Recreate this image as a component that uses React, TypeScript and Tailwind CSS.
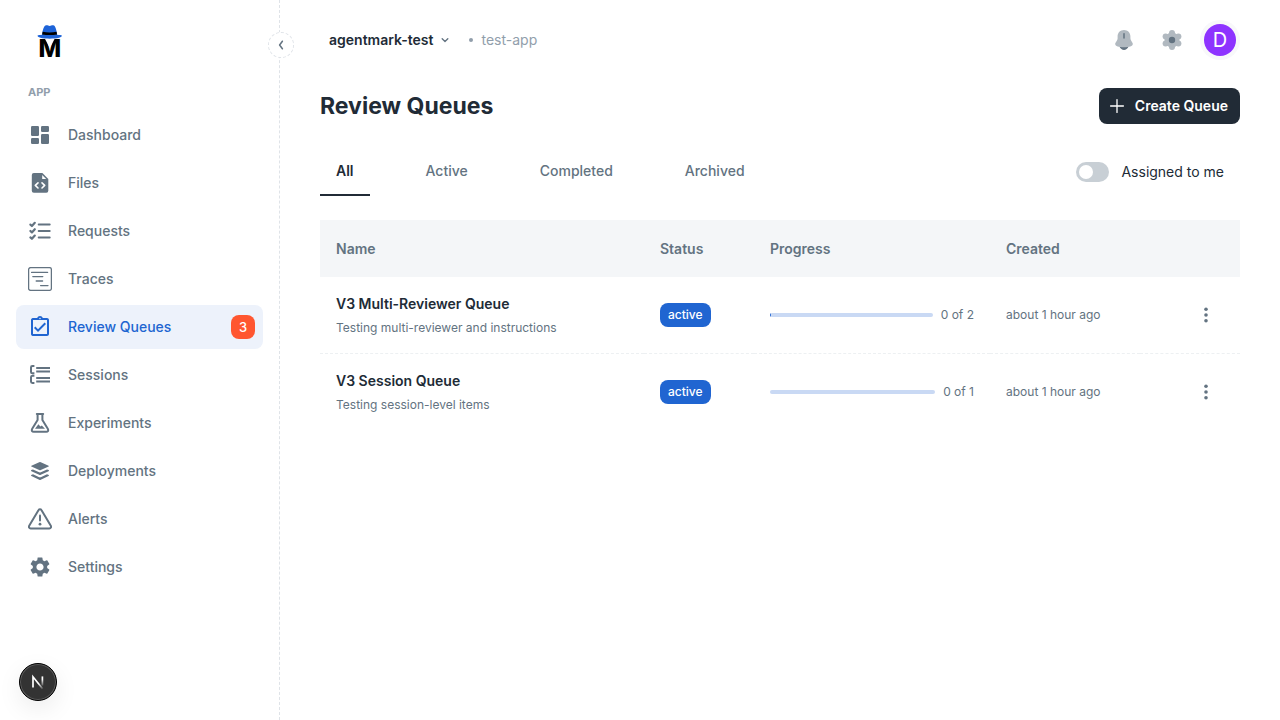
import { useState, type ReactNode } from "react";
import { MdOutlineAssignmentTurnedIn, MdSettings } from "react-icons/md";

function Icon({ children }: { children: ReactNode }) {
  return (
    <svg viewBox="0 0 24 24" className="size-6 shrink-0" fill="none" aria-hidden="true">
      {children}
    </svg>
  );
}

const DashboardIcon = () => (
  <Icon>
    <g fill="currentColor">
      <rect x="3" y="3" width="8" height="10" rx="1.2" />
      <rect x="3" y="15" width="8" height="6" rx="1.2" />
      <rect x="13" y="3" width="8" height="6" rx="1.2" />
      <rect x="13" y="11" width="8" height="10" rx="1.2" />
    </g>
  </Icon>
);

const FilesIcon = () => (
  <Icon>
    <path
      fill="currentColor"
      d="M5.8 2H14.4L20.3 7.9V19.8A2 2 0 0 1 18.3 21.8H5.8A2 2 0 0 1 3.8 19.8V4A2 2 0 0 1 5.8 2Z"
    />
    <path d="M14.2 4V8H18.2Z" fill="white" />
    <path
      d="M10 11.8 7.3 14.4 10 17M14 11.8 16.7 14.4 14 17"
      stroke="white"
      strokeWidth="1.6"
      strokeLinecap="round"
      strokeLinejoin="round"
    />
  </Icon>
);

const RequestsIcon = () => (
  <Icon>
    <g stroke="currentColor" strokeWidth="2" strokeLinecap="round" strokeLinejoin="round">
      <path d="M10.7 5.6H21.7M10.7 12H21.7M10.7 18.4H21.7" />
      <path d="M2.4 5.6 3.9 7 6.8 3.8M2.4 12 3.9 13.4 6.8 10.2M2.4 18.4 3.9 19.8 6.8 16.6" strokeWidth="2.2" />
    </g>
  </Icon>
);

const TracesIcon = () => (
  <Icon>
    <g stroke="currentColor" strokeWidth="1.3" strokeLinecap="round">
      <rect x="0.6" y="0.6" width="22.8" height="22.8" rx="2" />
      <path d="M3.6 5.4H19.6M4.8 9.6H14.8M8.2 14H14.6M12.6 18.6H20" />
    </g>
  </Icon>
);

const ReviewIcon = () => <MdOutlineAssignmentTurnedIn className="size-6 shrink-0" aria-hidden="true" />;

const SessionsIcon = () => (
  <Icon>
    <g stroke="currentColor" strokeWidth="2">
      <path d="M6.4 3H4.4Q3 3 3 4.4V9Q3 10.3 4.4 10.3H6.4M6.4 12.8H4.4Q3 12.8 3 14.3V18.6Q3 20 4.4 20H6.4" />
      <path d="M8.2 5H22M8.2 8.4H22M8.2 15H22M8.2 18.4H22" />
    </g>
  </Icon>
);

const ExperimentsIcon = () => (
  <Icon>
    <path
      d="M8.8 3H15.2M9.6 3.2V9L4.2 17.8C3.2 19.6 4 20.8 5.8 20.8H18.2C20 20.8 20.8 19.6 19.8 17.8L14.4 9V3.2"
      stroke="currentColor"
      strokeWidth="2"
      strokeLinecap="round"
      strokeLinejoin="round"
    />
    <path d="M7 17.8 10.4 13.2 12.4 15.4 13.8 14.6 17 17.8Z" fill="currentColor" />
  </Icon>
);

const DeploymentsIcon = () => (
  <Icon>
    <path
      d="M11.2 3.2Q12 2.8 12.8 3.2L20.6 6.7Q21.3 7.1 20.6 7.6L12.8 11.1Q12 11.5 11.2 11.1L3.4 7.6Q2.7 7.1 3.4 6.7Z"
      fill="currentColor"
    />
    <path
      d="M3.2 11.1Q2.7 11.7 3.4 12.2L11.2 15.8Q12 16.2 12.8 15.8L20.6 12.2Q21.3 11.7 20.8 11.1L19 10.4 12.8 13.3Q12 13.6 11.2 13.3L5 10.4ZM3.2 16Q2.7 16.6 3.4 17.1L11.2 20.7Q12 21.1 12.8 20.7L20.6 17.1Q21.3 16.6 20.8 16L19 15.3 12.8 18.2Q12 18.5 11.2 18.2L5 15.3Z"
      fill="currentColor"
    />
  </Icon>
);

const AlertsIcon = () => (
  <Icon>
    <g stroke="currentColor" strokeLinecap="round" strokeLinejoin="round">
      <path
        d="M10.6 3.1 1.2 18.8C.5 20.1 1.2 21.4 2.6 21.4H21.4C22.8 21.4 23.5 20.1 22.8 18.8L13.4 3.1C12.8 2 11.2 2 10.6 3.1Z"
        strokeWidth="2"
      />
      <path d="M12 8.4V13.4" strokeWidth="2" />
    </g>
    <circle cx="12" cy="17.2" r="1.4" fill="currentColor" />
  </Icon>
);

const SettingsIcon = () => <MdSettings className="size-6 shrink-0" aria-hidden="true" />;

const navItems = [
  { label: "Dashboard", icon: DashboardIcon },
  { label: "Files", icon: FilesIcon },
  { label: "Requests", icon: RequestsIcon },
  { label: "Traces", icon: TracesIcon },
  { label: "Review Queues", icon: ReviewIcon, badge: 3, active: true },
  { label: "Sessions", icon: SessionsIcon },
  { label: "Experiments", icon: ExperimentsIcon },
  { label: "Deployments", icon: DeploymentsIcon },
  { label: "Alerts", icon: AlertsIcon },
  { label: "Settings", icon: SettingsIcon },
];

const tabs = ["All", "Active", "Completed", "Archived"];

const queues = [
  {
    name: "V3 Multi-Reviewer Queue",
    description: "Testing multi-reviewer and instructions",
    status: "active",
    done: 0,
    total: 2,
    started: true,
    created: "about 1 hour ago",
  },
  {
    name: "V3 Session Queue",
    description: "Testing session-level items",
    status: "active",
    done: 0,
    total: 1,
    started: false,
    created: "about 1 hour ago",
  },
];

function Logo() {
  return (
    <svg viewBox="0 0 26 40" className="h-10 w-[26px]" role="img" aria-label="AgentMark">
      <text
        x="12.7"
        y="33"
        textAnchor="middle"
        fontSize="24"
        className="fill-black font-['Inter',sans-serif] font-extrabold"
      >
        M
      </text>
      <path d="M7 13H18.6L12.8 24Z" fill="white" />
      <path
        d="M5 11C5.6 7 6.4 2.8 8.4 1.6C10.2.8 11.2 2 12.7 2C14.2 2 15.2.8 17 1.6C18.8 2.8 19.6 7 20.2 11Z"
        fill="#1d63d8"
      />
      <path
        d="M.6 11.6C3 10.2 22.4 10.2 24.8 11.6C25.2 12.4 24 13.2 22 13.8C17 15 8.4 15 3.4 13.8C1.4 13.2.2 12.4.6 11.6Z"
        fill="#1d63d8"
      />
      <path d="M5.6 7.8Q12.7 9 19.6 7.8L20 10.6Q12.7 11.6 5.2 10.6Z" fill="black" />
    </svg>
  );
}

function Sidebar() {
  return (
    <aside className="relative w-[280px] shrink-0 border-r border-dashed border-[#dfe3e8] px-4">
      <a href="#home" className="ml-5 mt-6 block w-fit pl-px">
        <Logo />
      </a>
      <button
        type="button"
        aria-label="Collapse sidebar"
        className="absolute -right-[15px] top-8 flex size-[26px] items-center justify-center rounded-full border border-dashed border-[#dfe3e8] bg-white text-[#637381]"
      >
        <svg viewBox="0 0 16 16" className="size-4" fill="none" aria-hidden="true">
          <path d="M9.4 4.2 6.6 8 9.4 11.8" stroke="currentColor" strokeWidth="1.5" strokeLinecap="round" strokeLinejoin="round" />
        </svg>
      </button>
      <h2 className="mb-3 mt-[19px] px-3 text-[11px] font-bold leading-[18px] text-[#919eab]">APP</h2>
      <nav aria-label="App" className="flex flex-col gap-1">
        {navItems.map(({ label, icon: ItemIcon, badge, active }) => (
          <a
            key={label}
            href="#nav"
            aria-current={active ? "page" : undefined}
            className={
              active
                ? "flex h-11 items-center gap-4 rounded-lg bg-[#edf2fb] pl-3 pr-2 text-sm font-medium text-[#2065d1]"
                : "flex h-11 items-center gap-4 rounded-lg pl-3 pr-2 text-sm font-medium text-[#637381]"
            }
          >
            <ItemIcon />
            <span className="flex-1">{label}</span>
            {badge && (
              <span className="flex size-6 items-center justify-center rounded-lg bg-[#ff5630] text-[13px] font-medium text-white">
                {badge}
              </span>
            )}
          </a>
        ))}
      </nav>
    </aside>
  );
}

function TopBar() {
  return (
    <header className="flex h-20 items-center justify-between pl-[9px] pr-1">
      <div className="flex items-center text-sm">
        <button type="button" className="flex items-center gap-1 font-semibold text-[#212b36]">
          agentmark-test
          <svg viewBox="0 0 16 16" className="size-4 text-[#637381]" fill="none" aria-hidden="true">
            <path d="M5.2 6.8 8 9.4 10.8 6.8" stroke="currentColor" strokeWidth="1.4" strokeLinecap="round" strokeLinejoin="round" />
          </svg>
        </button>
        <span className="ml-4 size-1 rounded-full bg-[#919eab]" />
        <a href="#app" className="ml-2 text-[#919eab]">test-app</a>
      </div>
      <div className="flex items-center gap-6">
        <button type="button" aria-label="Notifications">
          <svg viewBox="0 0 24 24" className="size-6" aria-hidden="true">
            <path d="M7.4 18.6H16.6Q15 22 12 22T7.4 18.6Z" fill="#637381" />
            <path
              d="M12 2C8.2 2 5.6 4.8 5.6 8.4V10.2C5.6 11.4 5.2 12.2 4.5 13.2C3.8 14.2 3.2 15 3.2 16C3.2 18.2 6.8 19.2 12 19.2S20.8 18.2 20.8 16C20.8 15 20.2 14.2 19.5 13.2C18.8 12.2 18.4 11.4 18.4 10.2V8.4C18.4 4.8 15.8 2 12 2Z"
              fill="#b1b9c0"
            />
            <path d="M12 5.8V10" stroke="#637381" strokeWidth="1.5" strokeLinecap="round" />
          </svg>
        </button>
        <button type="button" aria-label="Preferences">
          <svg viewBox="0 0 24 24" className="size-6" aria-hidden="true">
            <g fill="#b1b9c0">
              <circle cx="12" cy="12" r="7.5" />
              <circle cx="12" cy="5" r="3" />
              <circle cx="12" cy="19" r="3" />
              <circle cx="5.6" cy="8.4" r="3" />
              <circle cx="18.4" cy="8.4" r="3" />
              <circle cx="5.6" cy="15.6" r="3" />
              <circle cx="18.4" cy="15.6" r="3" />
            </g>
            <circle cx="12" cy="12" r="3.2" fill="#637381" />
          </svg>
        </button>
        <button
          type="button"
          aria-label="Account"
          className="-ml-1 flex size-8 items-center justify-center rounded-full bg-[#8e33ff] text-xl text-white ring-4 ring-[#f8f8fa]"
        >
          D
        </button>
      </div>
    </header>
  );
}

function QueueTable() {
  return (
    <table className="mt-6 w-full table-fixed text-left">
      <colgroup>
        <col />
        <col className="w-[110px]" />
        <col className="w-[236px]" />
        <col className="w-[150px]" />
        <col className="w-[100px]" />
      </colgroup>
      <thead>
        <tr className="h-[57px] bg-[#f4f6f8] text-sm text-[#637381]">
          <th scope="col" className="px-4 font-semibold">Name</th>
          <th scope="col" className="px-4 font-semibold">Status</th>
          <th scope="col" className="px-4 font-semibold">Progress</th>
          <th scope="col" className="px-4 font-semibold">Created</th>
          <th scope="col" aria-label="Actions" className="px-4" />
        </tr>
      </thead>
      <tbody>
        {queues.map((queue) => (
          <tr key={queue.name} className="h-[76px] border-b border-dashed border-[#edf0f2] last:h-[78px] last:border-b-0">
            <td className="px-4">
              <div className="text-sm font-semibold leading-[22px] text-[#212b36]">{queue.name}</div>
              <div className="mt-1 text-xs leading-[18px] text-[#637381]">{queue.description}</div>
            </td>
            <td className="px-4">
              <span className="flex h-6 w-fit items-center rounded-lg bg-[#2065d1] px-2 text-xs font-medium text-white">
                {queue.status}
              </span>
            </td>
            <td className="px-4">
              <div className="flex items-center gap-2">
                <div
                  role="progressbar"
                  aria-label={`${queue.name} progress`}
                  aria-valuenow={queue.done}
                  aria-valuemax={queue.total}
                  className="h-1 flex-1 overflow-hidden rounded-full bg-[#c9d9f4]"
                >
                  {queue.started && <div className="h-full w-px bg-[#2065d1]" />}
                </div>
                <span className="text-xs text-[#637381]">
                  {queue.done} of {queue.total}
                </span>
              </div>
            </td>
            <td className="whitespace-nowrap px-4 text-xs text-[#637381]">{queue.created}</td>
            <td className="px-4">
              <button
                type="button"
                aria-label={`Actions for ${queue.name}`}
                className="ml-auto flex size-9 items-center justify-center text-[#637381]"
              >
                <svg viewBox="0 0 20 20" className="size-5" fill="currentColor" aria-hidden="true">
                  <circle cx="10" cy="4.2" r="1.8" />
                  <circle cx="10" cy="10" r="1.8" />
                  <circle cx="10" cy="15.8" r="1.8" />
                </svg>
              </button>
            </td>
          </tr>
        ))}
      </tbody>
    </table>
  );
}

export default function App() {
  const [tab, setTab] = useState("All");
  const [mine, setMine] = useState(false);

  return (
    <div className="flex min-h-screen bg-white font-['Inter',sans-serif] text-[#212b36]">
      <Sidebar />
      <main className="min-w-0 flex-1 px-10">
        <TopBar />
        <div className="mt-2 flex items-center justify-between">
          <h1 className="text-[23px] font-bold leading-9">Review Queues</h1>
          <button
            type="button"
            className="flex h-9 items-center gap-2 rounded-lg bg-[#212b36] pl-2 pr-3 text-sm font-semibold text-white"
          >
            <svg viewBox="0 0 20 20" className="size-5" fill="none" aria-hidden="true">
              <path d="M10 3.6V16.4M3.6 10H16.4" stroke="currentColor" strokeWidth="1.3" strokeLinecap="round" />
            </svg>
            Create Queue
          </button>
        </div>
        <div className="mt-6 flex items-center justify-between">
          <div role="tablist" className="flex gap-10">
            {tabs.map((name) => (
              <button
                key={name}
                type="button"
                role="tab"
                aria-selected={tab === name}
                onClick={() => setTab(name)}
                className={
                  tab === name
                    ? "h-12 border-b-2 border-[#212b36] px-4 text-sm font-semibold text-[#212b36]"
                    : "h-12 border-b-2 border-transparent px-4 text-sm font-medium text-[#637381]"
                }
              >
                {name}
              </button>
            ))}
          </div>
          <label className="flex items-center gap-3 pr-4 text-sm">
            <input
              type="checkbox"
              role="switch"
              checked={mine}
              onChange={(event) => setMine(event.target.checked)}
              className="h-5 w-[33px] appearance-none rounded-full bg-[#c8cfd5] p-[3px] before:block before:size-[14px] before:rounded-full before:bg-white checked:bg-[#212b36] checked:before:ml-auto"
            />
            Assigned to me
          </label>
        </div>
        <QueueTable />
      </main>
      <button
        type="button"
        aria-label="Open developer tools"
        className="fixed bottom-[19px] left-[19px] flex size-[38px] items-center justify-center rounded-full border border-black bg-[#333333] shadow-[inset_0_0_0_1px_#5c5c5c,0_8px_24px_rgba(0,0,0,0.08)]"
      >
        <svg viewBox="0 0 20 20" className="size-5" fill="none" aria-hidden="true">
          <defs>
            <linearGradient id="stem" x1="0" y1="4" x2="0" y2="15" gradientUnits="userSpaceOnUse">
              <stop offset="0.3" stopColor="white" />
              <stop offset="1" stopColor="white" stopOpacity="0" />
            </linearGradient>
            <linearGradient id="slash" x1="9" y1="9" x2="15" y2="17" gradientUnits="userSpaceOnUse">
              <stop offset="0.3" stopColor="white" />
              <stop offset="1" stopColor="white" stopOpacity="0.1" />
            </linearGradient>
          </defs>
          <path d="M5 15.6V4.8L14.6 16.8" stroke="url(#slash)" strokeWidth="1.7" />
          <path d="M14.4 4.4V13.6" stroke="url(#stem)" strokeWidth="1.7" />
        </svg>
      </button>
    </div>
  );
}
